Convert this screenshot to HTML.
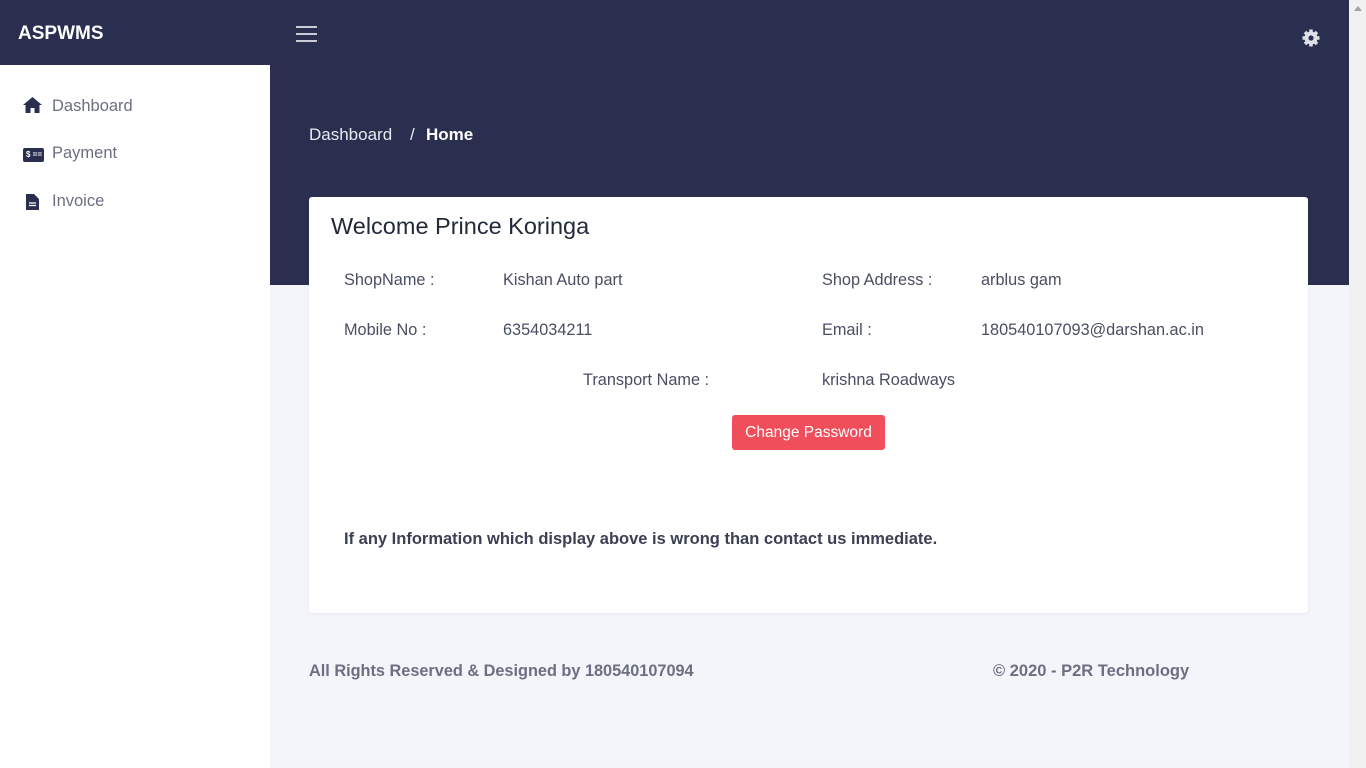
<!DOCTYPE html>
<html><head><style>
*{margin:0;padding:0;box-sizing:border-box}
body{width:1366px;height:768px;overflow:hidden;font-family:"Liberation Sans",sans-serif;background:#f3f5fb;position:relative}
.top{position:absolute;left:0;top:0;width:1349px;height:285px;background:#2a2f4f}
.brand{position:absolute;left:18px;top:23px;color:#fff;font-weight:bold;font-size:19px}
.side{position:absolute;left:0;top:65px;width:270px;height:703px;background:#fff}
.nav{position:absolute;left:52px;font-size:16.5px;color:#6b6f80}
.ic{position:absolute;left:23px}
.sb{position:absolute;left:1349px;top:0;width:17px;height:768px;background:#f1f1f1}
.card{position:absolute;left:309px;top:197px;width:999px;height:416px;background:#fff;border-radius:3px;box-shadow:0 1px 3px rgba(0,0,0,.05)}
.t{position:absolute;font-size:16.3px;color:#4a4e63}
.btn{position:absolute;left:732px;top:415px;width:153px;height:35px;background:#ef4e5a;color:#fff;border-radius:3px;font-size:15.5px;text-align:center;line-height:35px}
</style></head><body>
<div class="top"></div>
<div class="brand">ASPWMS</div>
<div style="position:absolute;left:296px;top:26px;width:21px;height:2px;background:#c9ccd8;box-shadow:0 7px 0 #c9ccd8,0 14px 0 #c9ccd8"></div>
<svg style="position:absolute;left:1301px;top:28px" width="20" height="20" viewBox="0 0 20 20"><g fill="#dfe1e8"><circle cx="10" cy="10" r="6.5"/><g stroke="#dfe1e8" stroke-width="3.5"><line x1="10" y1="1.5" x2="10" y2="18.5"/><line x1="1.5" y1="10" x2="18.5" y2="10"/><line x1="4" y1="4" x2="16" y2="16"/><line x1="16" y1="4" x2="4" y2="16"/></g></g><circle cx="10" cy="10" r="2.6" fill="#2a2f4f"/></svg>
<div class="side"></div>
<svg class="ic" style="top:97px" width="19" height="16" viewBox="0 0 19 16"><path d="M9.5 0L0 8h2.5v8h5v-5h4v5h5V8H19z" fill="#2a2f4f"/></svg>
<div class="nav" style="top:97px">Dashboard</div>
<div class="ic" style="top:148px;width:21px;height:14px;background:#2a2f4f;border-radius:2px;color:#fff;font-size:8px;font-weight:bold;line-height:14px;padding-left:3px">$ ==</div>
<div class="nav" style="top:144px">Payment</div>
<svg class="ic" style="top:194px;left:26px" width="13" height="16" viewBox="0 0 13 16"><path d="M0 0h8l5 5v11H0z" fill="#2a2f4f"/><path d="M3 9h7M3 11.5h7" stroke="#fff" stroke-width="1.2"/></svg>
<div class="nav" style="top:192px">Invoice</div>
<div style="position:absolute;left:309px;top:125px;font-size:17px;color:#e8eaf2">Dashboard</div>
<div style="position:absolute;left:410px;top:125px;font-size:17px;color:#e8eaf2">/</div>
<div style="position:absolute;left:426px;top:125px;font-size:17px;color:#fff;font-weight:bold">Home</div>
<div class="card"></div>
<div class="t" style="left:331px;top:213px;font-size:23.5px;color:#222a3a">Welcome Prince Koringa</div>
<div class="t" style="left:344px;top:271px">ShopName :</div>
<div class="t" style="left:503px;top:271px">Kishan Auto part</div>
<div class="t" style="left:822px;top:271px">Shop Address :</div>
<div class="t" style="left:981px;top:271px">arblus gam</div>
<div class="t" style="left:344px;top:321px">Mobile No :</div>
<div class="t" style="left:503px;top:321px">6354034211</div>
<div class="t" style="left:822px;top:321px">Email :</div>
<div class="t" style="left:981px;top:321px">180540107093@darshan.ac.in</div>
<div class="t" style="left:583px;top:371px">Transport Name :</div>
<div class="t" style="left:822px;top:371px">krishna Roadways</div>
<div class="btn">Change Password</div>
<div class="t" style="left:344px;top:530px;font-weight:bold;font-size:16.5px;color:#3c4054">If any Information which display above is wrong than contact us immediate.</div>
<div class="t" style="left:309px;top:662px;font-weight:bold;font-size:16.3px;color:#6b6f80">All Rights Reserved &amp; Designed by 180540107094</div>
<div class="t" style="left:993px;top:662px;font-weight:bold;font-size:16.5px;color:#6b6f80">© 2020 - P2R Technology</div>
<div class="sb"><div style="margin:6px auto;width:0;height:0;border:4px solid transparent;border-bottom:5px solid #a3a3a3;border-top:0"></div></div>
</body></html>
